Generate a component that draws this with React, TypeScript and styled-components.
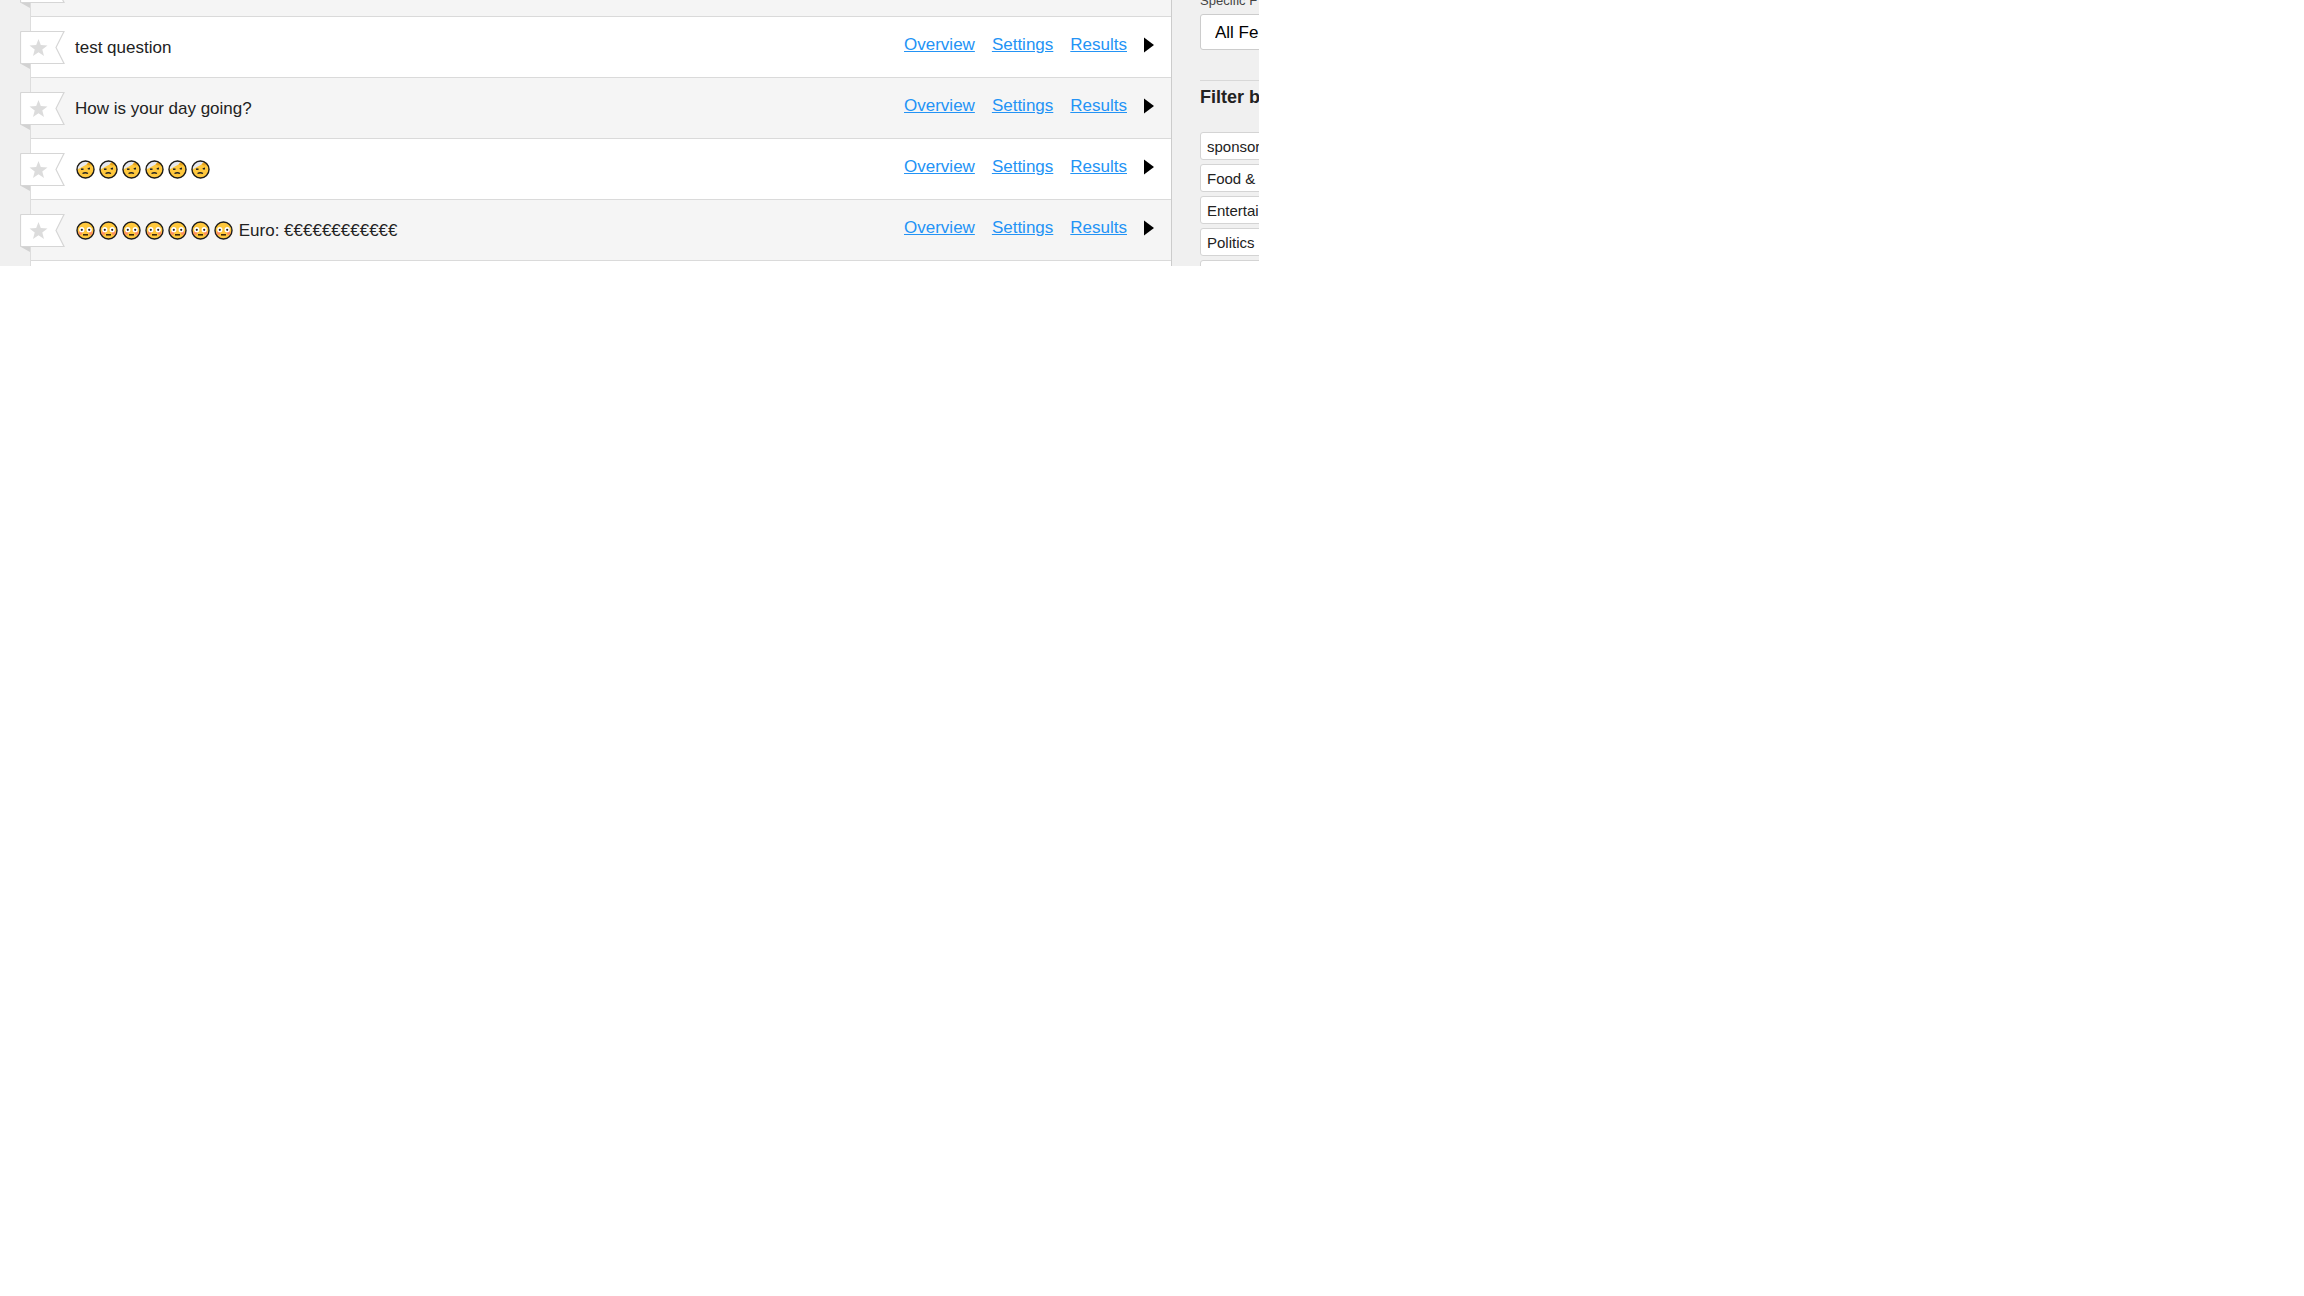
import React, { useState } from "react";
import styled, { createGlobalStyle } from "styled-components";

const GlobalStyle = createGlobalStyle`
  *, *::before, *::after { box-sizing: border-box; }
  body { margin: 0; background: #fff; }
  body, button, select { font-family: "Liberation Sans", Arial, sans-serif; }
`;

const Panel = styled.div`
  display: flex;
  width: 100%;
  max-width: 1259px;
  height: 266px;
  overflow: hidden;
  background: #f0f0f0;
`;

const Main = styled.main`
  flex: 1;
  min-width: 0;
  padding-left: 30px;
`;

const List = styled.ul`
  list-style: none;
  margin: -44px 0 0;
  padding: 0;
  border-left: 1px solid #ddd;
  border-right: 1px solid #ccc;
`;

const Row = styled.li<{ $shaded: boolean }>`
  display: flex;
  align-items: flex-start;
  height: 61px;
  padding: 14px 17px 0 0;
  border-bottom: 1px solid #dadada;
  background: ${(p) => (p.$shaded ? "#f5f5f5" : "#fff")};
`;

const Favourite = styled.button`
  flex: none;
  width: 46px;
  height: 38px;
  margin: 0 9px 0 -11px;
  padding: 0;
  border: 0;
  background: none;
  cursor: pointer;

  svg { display: block; }
`;

const Title = styled.span`
  flex: 1;
  display: flex;
  align-items: center;
  height: 34px;
  color: #222;
  font-size: 17px;
  white-space: pre;
`;

const Faces = styled.span`
  display: flex;
  gap: 4px;
  padding: 0 1px 2px;

  svg { display: block; }
`;

const Actions = styled.nav`
  display: flex;
  align-items: center;
  gap: 17px;
  height: 28px;
`;

const ActionLink = styled.a`
  color: #2393f5;
  font-size: 17px;
  text-decoration: underline;
`;

const Expand = styled.button`
  width: 10px;
  height: 16px;
  padding: 0;
  border: 0;
  background: none;
  cursor: pointer;

  svg { display: block; }
`;

const Sidebar = styled.aside`
  flex: none;
  width: 87px;
  padding-left: 28px;
  white-space: nowrap;
`;

const FeedLabel = styled.label`
  display: block;
  height: 20px;
  margin-top: -6px;
  color: #444;
  font-size: 13px;
  line-height: 14px;
`;

const FeedSelect = styled.select`
  appearance: none;
  display: block;
  width: 180px;
  height: 36px;
  padding: 0 14px;
  border: 1px solid #ccc;
  border-radius: 3px;
  background: #fff;
  color: #000;
  font-size: 17px;
`;

const FilterTitle = styled.h2`
  width: 180px;
  height: 52px;
  margin: 30px 0 0;
  padding-top: 5px;
  border-top: 1px solid #d8d8d8;
  color: #222;
  font-size: 18px;
  line-height: 22px;
`;

const Tags = styled.div`
  display: flex;
  flex-direction: column;
  gap: 4px;
`;

const Tag = styled.button`
  flex: none;
  width: 180px;
  height: 28px;
  padding: 0 6px;
  border: 1px solid #d4d4d4;
  border-radius: 3px;
  background: #fff;
  color: #222;
  font-size: 15px;
  text-align: left;
  cursor: pointer;
`;

function Ribbon() {
  return (
    <svg width="46" height="38" viewBox="0 0 46 38" aria-hidden="true">
      <path d="M1 33H10V38Z" fill="#d2d2d2" />
      <path d="M1.5 .5H44L36 16.5L44 32.5H1.5Q.5 32.5 .5 31.5V1.5Q.5 .5 1.5 .5Z" fill="#fff" stroke="#d6d6d6" strokeWidth="1.2" />
      <path
        d="M18.5 8L20.8 14.1L27.5 14.4L22.3 18.5L24 25L18.5 21.3L13 25L14.7 18.5L9.5 14.4L16.2 14.1Z"
        fill="#dcdcdc"
      />
    </svg>
  );
}

function BandagedFace() {
  return (
    <svg width="19" height="19" viewBox="0 0 19 19" aria-hidden="true">
      <circle cx="9.5" cy="9.5" r="8.7" fill="#ffc83d" />
      <path d="M1 9.8A8.7 8.7 0 0 1 13 1.6L10.5 4.5Z" fill="#e6e8ee" />
      <path d="M13 2L16.5 5L13 5.5L10.5 4.5Z" fill="#e8a31c" />
      <circle cx="9.5" cy="9.5" r="8.5" fill="none" stroke="#1c1c1c" strokeWidth="1.4" />
      <path d="M5 9.2H7.5" stroke="#222" strokeWidth="1.5" />
      <path d="M11.5 8.2L14 7.6V9.4H12Z" fill="#222" />
      <path d="M6.5 13.5Q9.3 12 12 13.5" fill="none" stroke="#222" strokeWidth="1.3" />
    </svg>
  );
}

function FlushedFace() {
  return (
    <svg width="19" height="19" viewBox="0 0 19 19" aria-hidden="true">
      <circle cx="9.5" cy="9.5" r="8.5" fill="#ffc83d" stroke="#1c1c1c" strokeWidth="1.4" />
      <circle cx="4.3" cy="12" r="1.9" fill="#ff9060" />
      <circle cx="14.7" cy="12" r="1.9" fill="#ff9060" />
      <circle cx="5.8" cy="8.7" r="2.6" fill="#fff" />
      <circle cx="13.2" cy="8.7" r="2.6" fill="#fff" />
      <circle cx="5.8" cy="8.8" r="1.1" fill="#222" />
      <circle cx="13.2" cy="8.8" r="1.1" fill="#222" />
      <path d="M7 13.8H12" stroke="#33240a" strokeWidth="1.5" />
    </svg>
  );
}

type Question = { text: string; face?: "bandaged" | "flushed"; count?: number };

const questions: Question[] = [
  { text: "" },
  { text: "test question" },
  { text: "How is your day going?" },
  { text: "", face: "bandaged", count: 6 },
  { text: " Euro: €€€€€€€€€€€€", face: "flushed", count: 7 },
  { text: "" },
];

const tags = ["sponsor", "Food &", "Entertai", "Politics", ""];

function QuestionRow({ question, shaded }: { question: Question; shaded: boolean }) {
  const [favourite, setFavourite] = useState(false);
  const Face = question.face === "bandaged" ? BandagedFace : FlushedFace;
  return (
    <Row $shaded={shaded}>
      <Favourite aria-label="Favourite" aria-pressed={favourite} onClick={() => setFavourite(!favourite)}>
        <Ribbon />
      </Favourite>
      <Title>
        {question.face && (
          <Faces>
            {Array.from({ length: question.count ?? 0 }, (_, i) => (
              <Face key={i} />
            ))}
          </Faces>
        )}
        {question.text}
      </Title>
      {(question.text || question.face) && (
        <Actions>
          <ActionLink href="#overview">Overview</ActionLink>
          <ActionLink href="#settings">Settings</ActionLink>
          <ActionLink href="#results">Results</ActionLink>
          <Expand aria-label="Expand">
            <svg width="10" height="16" viewBox="0 0 10 16" aria-hidden="true">
              <path d="M0 .5L10 8L0 15.5Z" />
            </svg>
          </Expand>
        </Actions>
      )}
    </Row>
  );
}

export default function App() {
  return (
    <>
      <GlobalStyle />
      <Panel>
        <Main>
          <List>
            {questions.map((question, i) => (
              <QuestionRow key={i} question={question} shaded={i % 2 === 0} />
            ))}
          </List>
        </Main>
        <Sidebar>
          <FeedLabel htmlFor="feed">Specific F</FeedLabel>
          <FeedSelect id="feed">
            <option>All Fe</option>
          </FeedSelect>
          <FilterTitle>Filter b</FilterTitle>
          <Tags>
            {tags.map((tag, i) => (
              <Tag key={i} aria-label={tag || "More"}>{tag}</Tag>
            ))}
          </Tags>
        </Sidebar>
      </Panel>
    </>
  );
}
